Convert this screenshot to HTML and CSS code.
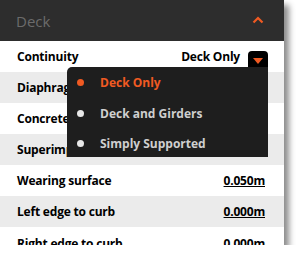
FILE: index.html
```html
<!DOCTYPE html>
<html>
<head>
<meta charset="utf-8">
<link rel="stylesheet" href="styles.css">
</head>
<body>
<div class="panel">
  <div class="header">
    <span class="title">Deck</span>
    <svg class="chev" width="12" height="8" viewBox="0 0 12 8"><path d="M1.5 6.5 L6 2 L10.5 6.5" fill="none" stroke="#f05a22" stroke-width="2.2"/></svg>
  </div>
  <div class="row">
    <span class="label">Continuity</span>
    <span class="sel">Deck Only</span>
    <span class="btn"><svg width="10" height="6" viewBox="0 0 10 6"><path d="M0 0 H10 L5 6 Z" fill="#f05a22"/></svg></span>
    <div class="menu">
      <div class="item active"><span class="dot"></span>Deck Only</div>
      <div class="item"><span class="dot"></span>Deck and Girders</div>
      <div class="item"><span class="dot"></span>Simply Supported</div>
    </div>
  </div>
  <div class="row alt"><span class="label">Diaphragm width</span><span class="val plain">0.000m</span></div>
  <div class="row"><span class="label">Concrete strength</span><span class="val">35.00MPa</span></div>
  <div class="row alt"><span class="label">Superimposed DL</span><span class="val">3.00kN/m</span></div>
  <div class="row"><span class="label">Wearing surface</span><span class="val">0.050m</span></div>
  <div class="row alt"><span class="label">Left edge to curb</span><span class="val">0.000m</span></div>
  <div class="row last"><span class="label">Right edge to curb</span><span class="val">0.000m</span></div>
</div>
</body>
</html>
```
FILE: styles.css
```css
* { box-sizing: border-box; }
body {
  margin: 0;
  background: #fff;
  font-family: "Open Sans", "Noto Sans", sans-serif;
}
.panel {
  width: 284px;
  height: 245px;
  overflow: visible;
  background: #fff;
  box-shadow: 5px 5px 6px rgba(0,0,0,0.45);
  position: relative;
}
.header {
  height: 41px;
  background: #2d2d2d;
  display: flex;
  align-items: center;
  justify-content: space-between;
  padding: 0 20px 0 16px;
}
.title {
  color: #6b6b6b;
  font-size: 15px;
}
.chev { display: block; margin-top: -2px; }
.row {
  height: 31px;
  display: flex;
  align-items: center;
  padding: 0 19px 0 17px;
  position: relative;
  font-size: 12px;
  font-weight: 700;
  color: #000;
}
.row.alt { background: #ebebeb; }
.row.last { height: 19px; overflow: hidden; align-items: flex-start; padding-top: 8px; }
.label { flex: 1; letter-spacing: -0.2px; }
.val { text-decoration: underline; letter-spacing: -0.2px; }
.val.plain { text-decoration: none; }
.sel { margin-right: 8px; letter-spacing: -0.2px; }
.btn {
  width: 20px;
  height: 21px;
  margin-top: 10px;
  margin-right: -3px;
  background: #000;
  border-radius: 4px 4px 0 0;
  display: flex;
  align-items: center;
  justify-content: center;
  padding-bottom: 2px;
}
.btn svg { display: block; }
.menu {
  position: absolute;
  left: 67px;
  top: 26px;
  width: 201px;
  height: 90px;
  background: #1e1e1e;
  border-radius: 5px 0 0 0;
  padding-top: 0;
  z-index: 2;
}
.item {
  height: 31px;
  display: flex;
  align-items: center;
  padding-left: 10px;
  color: #cfcfcf;
  font-size: 12px;
  font-weight: 700;
}
.item:last-child { height: 28px; }
.item .dot {
  width: 7px;
  height: 7px;
  border-radius: 50%;
  background: #e8e8e8;
  margin-right: 16px;
}
.item.active { color: #f05a22; }
.item.active .dot { background: #f05a22; }
```
